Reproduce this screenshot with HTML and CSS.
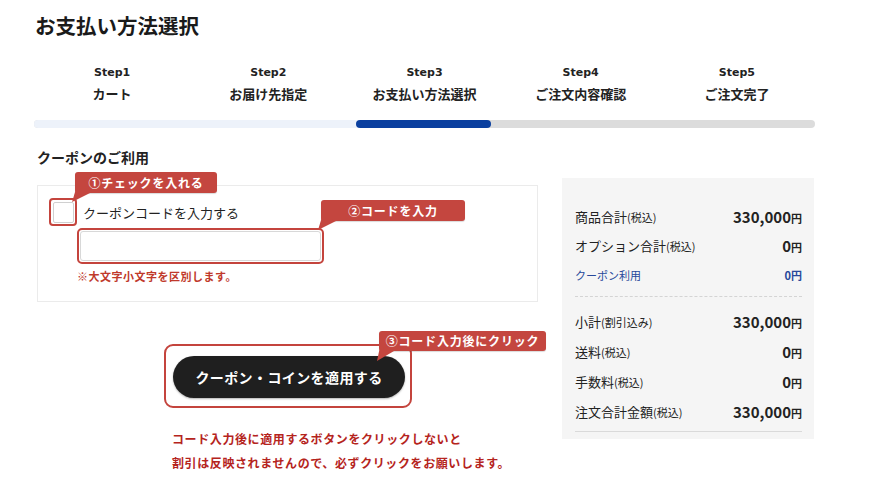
FILE: index.html
```html
<!DOCTYPE html>
<html lang="ja">
<head>
<meta charset="utf-8">
<title>お支払い方法選択</title>
<link rel="stylesheet" href="styles.css">
</head>
<body>
<div class="page">
  <h1 class="title">お支払い方法選択</h1>
  <ol class="steps">
    <li class="step"><span class="step-no">Step1</span><span class="step-name">カート</span></li>
    <li class="step"><span class="step-no">Step2</span><span class="step-name">お届け先指定</span></li>
    <li class="step"><span class="step-no">Step3</span><span class="step-name">お支払い方法選択</span></li>
    <li class="step"><span class="step-no">Step4</span><span class="step-name">ご注文内容確認</span></li>
    <li class="step"><span class="step-no">Step5</span><span class="step-name">ご注文完了</span></li>
  </ol>
  <div class="progress"><span class="progress-done"></span><span class="progress-current"></span></div>

  <div class="main">
    <section class="coupon">
      <h2 class="coupon-heading">クーポンのご利用</h2>
      <div class="coupon-box">
        <div class="check-row">
          <span class="check-ring"><span class="checkbox"></span></span>
          <span class="check-label">クーポンコードを入力する</span>
        </div>
        <div class="input-ring"><span class="code-input"></span></div>
        <p class="case-note">※大文字小文字を区別します。</p>
        <span class="callout callout-1">①チェックを入れる</span>
        <span class="callout callout-2">②コードを入力</span>
      </div>
      <div class="apply-ring">
        <button class="apply-btn" type="button">クーポン・コインを適用する</button>
        <span class="callout callout-3">③コード入力後にクリック</span>
      </div>
      <p class="apply-note">コード入力後に適用するボタンをクリックしないと<br>割引は反映されませんので、必ずクリックをお願いします。</p>
    </section>

    <aside class="summary">
      <div class="row"><span class="label">商品合計<small>(税込)</small></span><span class="value">330,000<small>円</small></span></div>
      <div class="row"><span class="label">オプション合計<small>(税込)</small></span><span class="value">0<small>円</small></span></div>
      <div class="row row-coupon"><span class="label">クーポン利用</span><span class="value">0円</span></div>
      <hr class="dash">
      <div class="row row-b"><span class="label">小計<small>(割引込み)</small></span><span class="value">330,000<small>円</small></span></div>
      <div class="row row-b"><span class="label">送料<small>(税込)</small></span><span class="value">0<small>円</small></span></div>
      <div class="row row-b"><span class="label">手数料<small>(税込)</small></span><span class="value">0<small>円</small></span></div>
      <div class="row row-b"><span class="label">注文合計金額<small>(税込)</small></span><span class="value">330,000<small>円</small></span></div>
      <hr class="solid">
    </aside>
  </div>
</div>
</body>
</html>
```

FILE: styles.css
```css
* { box-sizing: border-box; }
html, body { margin: 0; padding: 0; background: #fff; }
body {
  font-family: "Noto Sans CJK JP", "Noto Sans", sans-serif;
  color: #222;
}
.page {
  margin-left: 34px;
  width: 781px;
}
.title {
  margin: 0 0 0 1px;
  padding-top: 10px;
  font-size: 20.5px;
  line-height: 30px;
  font-weight: 700;
  color: #1a1a1a;
}
.steps {
  list-style: none;
  margin: 24px 0 0;
  padding: 0;
  display: grid;
  grid-template-columns: repeat(5, 1fr);
}
.step {
  display: flex;
  flex-direction: column;
  align-items: center;
}
.step-no {
  font-family: "DejaVu Sans", sans-serif;
  font-weight: 700;
  font-size: 11px;
  line-height: 18px;
  color: #222;
}
.step-name {
  font-weight: 700;
  font-size: 13px;
  line-height: 22px;
  margin-top: 1px;
}
.progress {
  margin-top: 15px;
  height: 8px;
  border-radius: 4px;
  background: #dcdcdc;
  display: flex;
}
.progress-done {
  width: 326px;
  background: #edf2fa;
  border-radius: 4px 0 0 4px;
  margin-right: -4px;
}
.progress-current {
  width: 135px;
  background: #0a3f9f;
  border-radius: 5px;
  position: relative;
}

.main {
  display: flex;
  gap: 24px;
  padding-left: 3px;
  margin-top: 21px;
}
.coupon { width: 501px; }
.coupon-heading {
  margin: 0;
  font-size: 14px;
  line-height: 16px;
  font-weight: 700;
}
.coupon-box {
  position: relative;
  margin-top: 20px;
  height: 117px;
  border: 1px solid #ebebeb;
  padding: 12px 0 0 11px;
}
.check-row {
  display: flex;
  align-items: center;
  gap: 6px;
}
.check-ring {
  width: 28px;
  height: 28px;
  border: 2px solid #c4443d;
  border-radius: 4px;
  display: flex;
  align-items: center;
  justify-content: center;
}
.checkbox {
  width: 21px;
  height: 21px;
  border: 1px solid #d0d0d0;
  border-radius: 2px;
  background: #fff;
}
.check-label {
  font-size: 13px;
  color: #222;
}
.input-ring {
  margin: 2px 0 0 28px;
  width: 247px;
  height: 36px;
  border: 2px solid #c4443d;
  border-radius: 5px;
  padding: 1px;
  display: flex;
}
.code-input {
  flex: 1;
  border: 1px solid #d8d8d8;
  border-radius: 3px;
  background: #fff;
}
.case-note {
  margin: 4px 0 0 28px;
  font-size: 11px;
  line-height: 16px;
  font-weight: 700;
  letter-spacing: 0.5px;
  color: #c0392b;
}
.callout {
  position: absolute;
  background: #c4463f;
  color: #fff;
  font-size: 12px;
  font-weight: 700;
  line-height: 21px;
  height: 21px;
  border-radius: 3px;
  text-align: center;
  letter-spacing: 0.8px;
  box-shadow: 0 1px 1px rgba(0,0,0,0.15);
  white-space: nowrap;
}
.callout::after {
  content: "";
  position: absolute;
  left: -3px;
  top: 17px;
  width: 18px;
  height: 13px;
  background: #c4463f;
  clip-path: polygon(4px 0, 18px 4px, 0 13px);
}
.callout-1 { left: 37px; top: -14px; width: 142px; }
.callout-2 { left: 283px; top: 14px; width: 144px; }
.callout-3 { left: 213px; top: -15px; width: 167px; height: 20px; line-height: 20px; }
.callout-3::after { top: 16px; height: 14px; clip-path: polygon(4px 0, 18px 4px, 1px 14px); }

.apply-ring {
  position: relative;
  margin: 42px 0 0 127px;
  width: 248px;
  height: 64px;
  border: 2px solid #c4443d;
  border-radius: 9px;
  padding: 10px 0 0 7px;
}
.apply-btn {
  display: block;
  width: 232px;
  height: 42px;
  border: none;
  border-radius: 21px;
  background: #1f1f1f;
  color: #fff;
  font-family: inherit;
  font-size: 14px;
  font-weight: 700;
  letter-spacing: 0.4px;
  padding: 0;
  box-shadow: 0 1px 2px rgba(0,0,0,0.3);
}
.apply-note {
  margin: 19px 0 0 135px;
  font-size: 12px;
  line-height: 24px;
  font-weight: 700;
  color: #b5241d;
  letter-spacing: 0.6px;
}

.summary {
  width: 252px;
  height: 261px;
  margin-top: 29px;
  background: #f5f5f5;
  padding: 24px 12px 0 13px;
}
.row {
  display: flex;
  justify-content: space-between;
  align-items: center;
  height: 29px;
}
.row-b { height: 30px; }
.label {
  font-size: 13px;
  color: #222;
}
.label small { font-size: 11px; }
.value {
  font-size: 15px;
  font-weight: 700;
  color: #222;
}
.value small { font-size: 11px; }
.row-coupon .label { font-size: 11px; color: #27489a; }
.row-coupon .value { font-size: 11px; color: #27489a; }
.dash {
  margin: 7px 0 9px;
  border: none;
  border-top: 1px dashed #d4d4d4;
  height: 0;
}
.solid {
  margin: 5px 0 0;
  border: none;
  border-top: 1px solid #dadada;
  height: 0;
}
```
